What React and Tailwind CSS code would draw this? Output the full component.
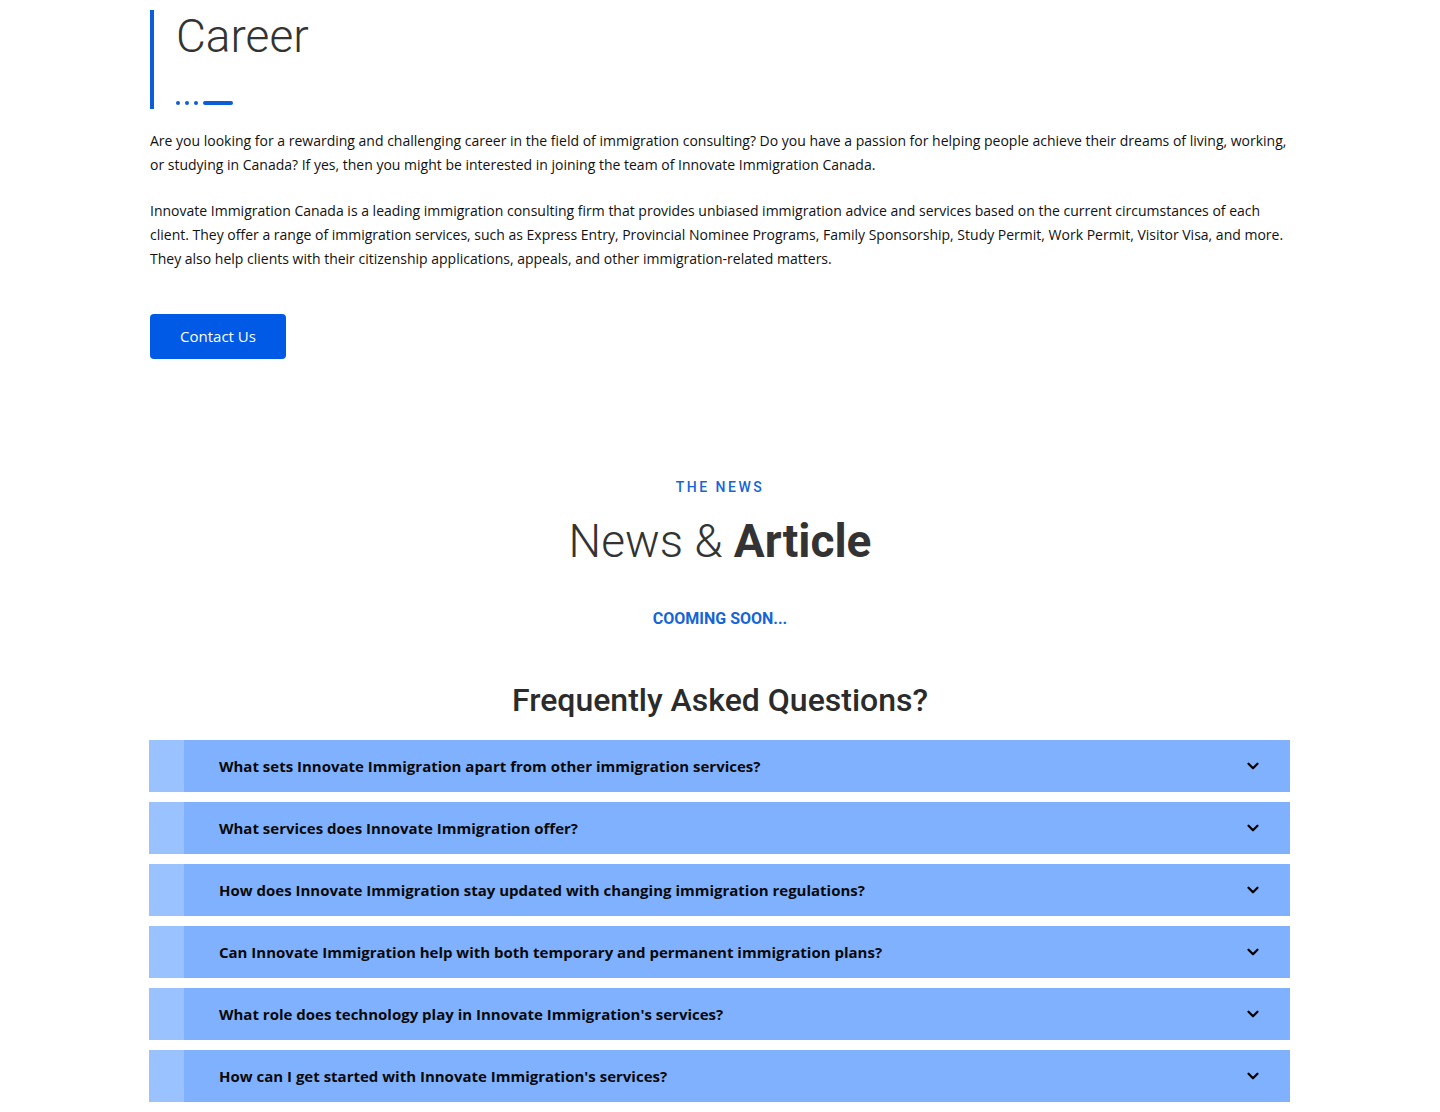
import { ChevronDown } from 'lucide-react';

const faqs = [
  "What sets Innovate Immigration apart from other immigration services?",
  'What services does Innovate Immigration offer?',
  'How does Innovate Immigration stay updated with changing immigration regulations?',
  'Can Innovate Immigration help with both temporary and permanent immigration plans?',
  "What role does technology play in Innovate Immigration's services?",
  "How can I get started with Innovate Immigration's services?",
];

const App = () => {
  return (
    <div className="bg-white min-h-screen font-['Open_Sans',sans-serif] text-[#111]">
      {/* Career intro */}
      <section className="w-[1140px] mx-auto pt-[10px]">
        <div className="border-l-4 border-[#0b5ed7] pl-[22px] h-[99px] flex flex-col">
          <h1 className="font-['Roboto',sans-serif] font-light text-[46px] leading-[54px] text-[#333] -mt-[1px]">
            Career
          </h1>
          <div className="flex items-center gap-[5px] mt-auto mb-[4px]">
            <span className="w-[4px] h-[4px] rounded-full bg-[#0b5ed7]"></span>
            <span className="w-[4px] h-[4px] rounded-full bg-[#0b5ed7]"></span>
            <span className="w-[4px] h-[4px] rounded-full bg-[#0b5ed7]"></span>
            <span className="w-[30px] h-[4px] rounded-full bg-[#0b5ed7]"></span>
          </div>
        </div>

        <p className="text-[14px] leading-[24px] mt-[20px]">
          Are you looking for a rewarding and challenging career in the field of immigration consulting? Do you have a passion for helping people achieve their dreams of living, working, or studying in Canada? If yes, then you might be interested in joining the team of Innovate Immigration Canada.
        </p>
        <p className="text-[14px] leading-[24px] mt-[22px]">
          Innovate Immigration Canada is a leading immigration consulting firm that provides unbiased immigration advice and services based on the current circumstances of each client. They offer a range of immigration services, such as Express Entry, Provincial Nominee Programs, Family Sponsorship, Study Permit, Work Permit, Visitor Visa, and more. They also help clients with their citizenship applications, appeals, and other immigration-related matters.
        </p>

        <button className="mt-[43px] w-[136px] h-[45px] rounded bg-[#005ae6] text-white text-[15px]">
          Contact Us
        </button>
      </section>

      {/* News */}
      <section className="text-center pt-[118px] font-['Roboto',sans-serif]">
        <p className="text-[14px] font-medium tracking-[2.5px] text-[#1565d8] leading-[20px]">THE NEWS</p>
        <h2 className="text-[46px] leading-[56px] text-[#333] mt-[16px]">
          <span className="font-light">News &amp; </span>
          <span className="font-bold">Article</span>
        </h2>
        <p className="text-[16px] font-bold text-[#1565d8] mt-[38px] leading-[24px]">COOMING SOON...</p>
      </section>

      {/* FAQ */}
      <section className="w-[1140px] mx-auto pt-[49px] pb-[10px]">
        <h2 className="text-center font-['Roboto',sans-serif] font-medium text-[32px] leading-[40px] text-[#2b2b2b]">
          Frequently Asked Questions?
        </h2>
        <div className="mt-[20px] flex flex-col gap-[10px] -ml-[1px]">
          {faqs.map((q) => (
            <div key={q} className="flex h-[52px] bg-[#80b1ff]">
              <div className="w-[35px] bg-[#9ac2ff]"></div>
              <div className="flex-1 flex items-center justify-between pl-[35px] pr-[28px]">
                <span className="text-[15px] font-bold text-[#0a0a0a]">{q}</span>
                <ChevronDown size={18} strokeWidth={3} className="text-black" />
              </div>
            </div>
          ))}
        </div>
      </section>
    </div>
  );
};

export default App;
